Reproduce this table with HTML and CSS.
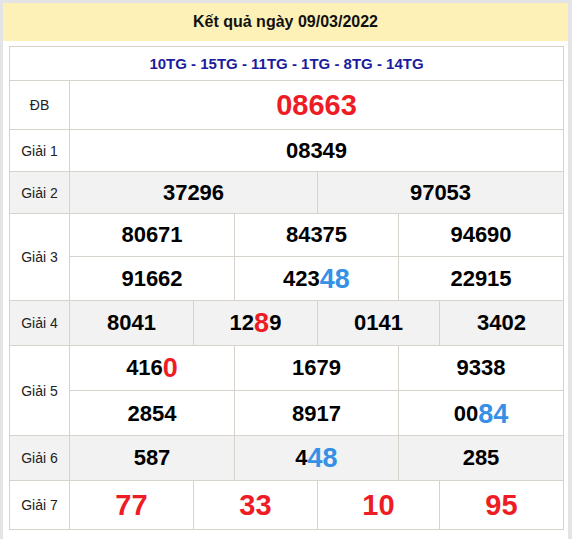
FILE: index.html
```html
<!DOCTYPE html>
<html lang="vi">
<head>
<meta charset="utf-8">
<title>Kết quả ngày 09/03/2022</title>
<link rel="stylesheet" href="styles.css">
</head>
<body>
<div class="page">
  <div class="head">Kết quả ngày 09/03/2022</div>
  <div class="wrap">
    <div class="board">
      <div class="caption">10TG - 15TG - 11TG - 1TG - 8TG - 14TG</div>

      <div class="row h-db">
        <div class="label">ĐB</div>
        <div class="cells cols-1"><div class="num big red">08663</div></div>
      </div>

      <div class="row h-42">
        <div class="label">Giải 1</div>
        <div class="cells cols-1"><div class="num">08349</div></div>
      </div>

      <div class="row h-42 grey">
        <div class="label">Giải 2</div>
        <div class="cells cols-2"><div class="num">37296</div><div class="num">97053</div></div>
      </div>

      <div class="row h-g3">
        <div class="label">Giải 3</div>
        <div class="cells cols-3 two g3">
          <div class="num">80671</div><div class="num">84375</div><div class="num">94690</div>
          <div class="num">91662</div><div class="num">423<span class="hl blue">48</span></div><div class="num">22915</div>
        </div>
      </div>

      <div class="row h-45 grey">
        <div class="label">Giải 4</div>
        <div class="cells cols-4">
          <div class="num">8041</div><div class="num">12<span class="hl red">8</span>9</div><div class="num">0141</div><div class="num">3402</div>
        </div>
      </div>

      <div class="row h-g5">
        <div class="label">Giải 5</div>
        <div class="cells cols-3 two g5">
          <div class="num">416<span class="hl red">0</span></div><div class="num">1679</div><div class="num">9338</div>
          <div class="num">2854</div><div class="num">8917</div><div class="num">00<span class="hl blue">84</span></div>
        </div>
      </div>

      <div class="row h-45 grey">
        <div class="label">Giải 6</div>
        <div class="cells cols-3">
          <div class="num">587</div><div class="num">4<span class="hl blue">48</span></div><div class="num">285</div>
        </div>
      </div>

      <div class="row h-db">
        <div class="label">Giải 7</div>
        <div class="cells cols-4">
          <div class="num big red">77</div><div class="num big red">33</div><div class="num big red">10</div><div class="num big red">95</div>
        </div>
      </div>
    </div>
  </div>
</div>
</body>
</html>
```

FILE: styles.css
```css
* { box-sizing: border-box; }

html, body {
  margin: 0;
  padding: 0;
}

body {
  background: #e4e4e6;
  font-family: "Liberation Sans", Arial, sans-serif;
  color: #000;
}

.page {
  margin: 3px 4px 0 3px;
  background: #fff;
  height: 536px;
}

.head {
  height: 38px;
  background: #fdf1b7;
  display: flex;
  align-items: center;
  justify-content: center;
  font-size: 16px;
  font-weight: bold;
  color: #111;
}

.wrap {
  padding: 5px 4px 0 6px;
}

.board {
  width: 555px;
  border-top: 1px solid #d8d2cc;
  border-left: 1px solid #d8d2cc;
}

.caption {
  height: 34px;
  border-right: 1px solid #d8d2cc;
  border-bottom: 1px solid #d8d2cc;
  display: flex;
  align-items: center;
  justify-content: center;
  font-size: 15px;
  font-weight: bold;
  color: #1c1ca0;
}

.row {
  display: flex;
  border-bottom: 1px solid #d8d2cc;
}

.row.grey { background: #f2f2f2; }

.h-db { height: 49px; }
.h-42 { height: 42px; }
.h-45 { height: 45px; }
.h-g3 { height: 87px; }
.h-g5 { height: 90px; }

.label {
  width: 60px;
  flex: none;
  border-right: 1px solid #d8d2cc;
  display: flex;
  align-items: center;
  justify-content: center;
  font-size: 14px;
  color: #222;
}

.cells {
  flex: 1;
  display: grid;
}

.cols-1 { grid-template-columns: 1fr; }
.cols-2 { grid-template-columns: 248fr 246fr; }
.cols-3 { grid-template-columns: 165fr 164fr 165fr; }
.cols-4 { grid-template-columns: 124fr 124fr 122fr 124fr; }

.g3 { grid-template-rows: 43px 44px; }
.g5 { grid-template-rows: 45px 45px; }

.num {
  border-right: 1px solid #d8d2cc;
  display: flex;
  align-items: center;
  justify-content: center;
  font-size: 22px;
  font-weight: bold;
  line-height: 24px;
  color: #000;
}

.two .num:nth-child(-n+3) {
  border-bottom: 1px solid #d8d2cc;
}

.num.big {
  font-size: 29px;
  line-height: 30px;
}

.red { color: #ee1c25; }
.blue { color: #3590e6; }

.num.red { color: #ee1c25; }

.hl {
  font-size: 27px;
  line-height: 24px;
}
```
